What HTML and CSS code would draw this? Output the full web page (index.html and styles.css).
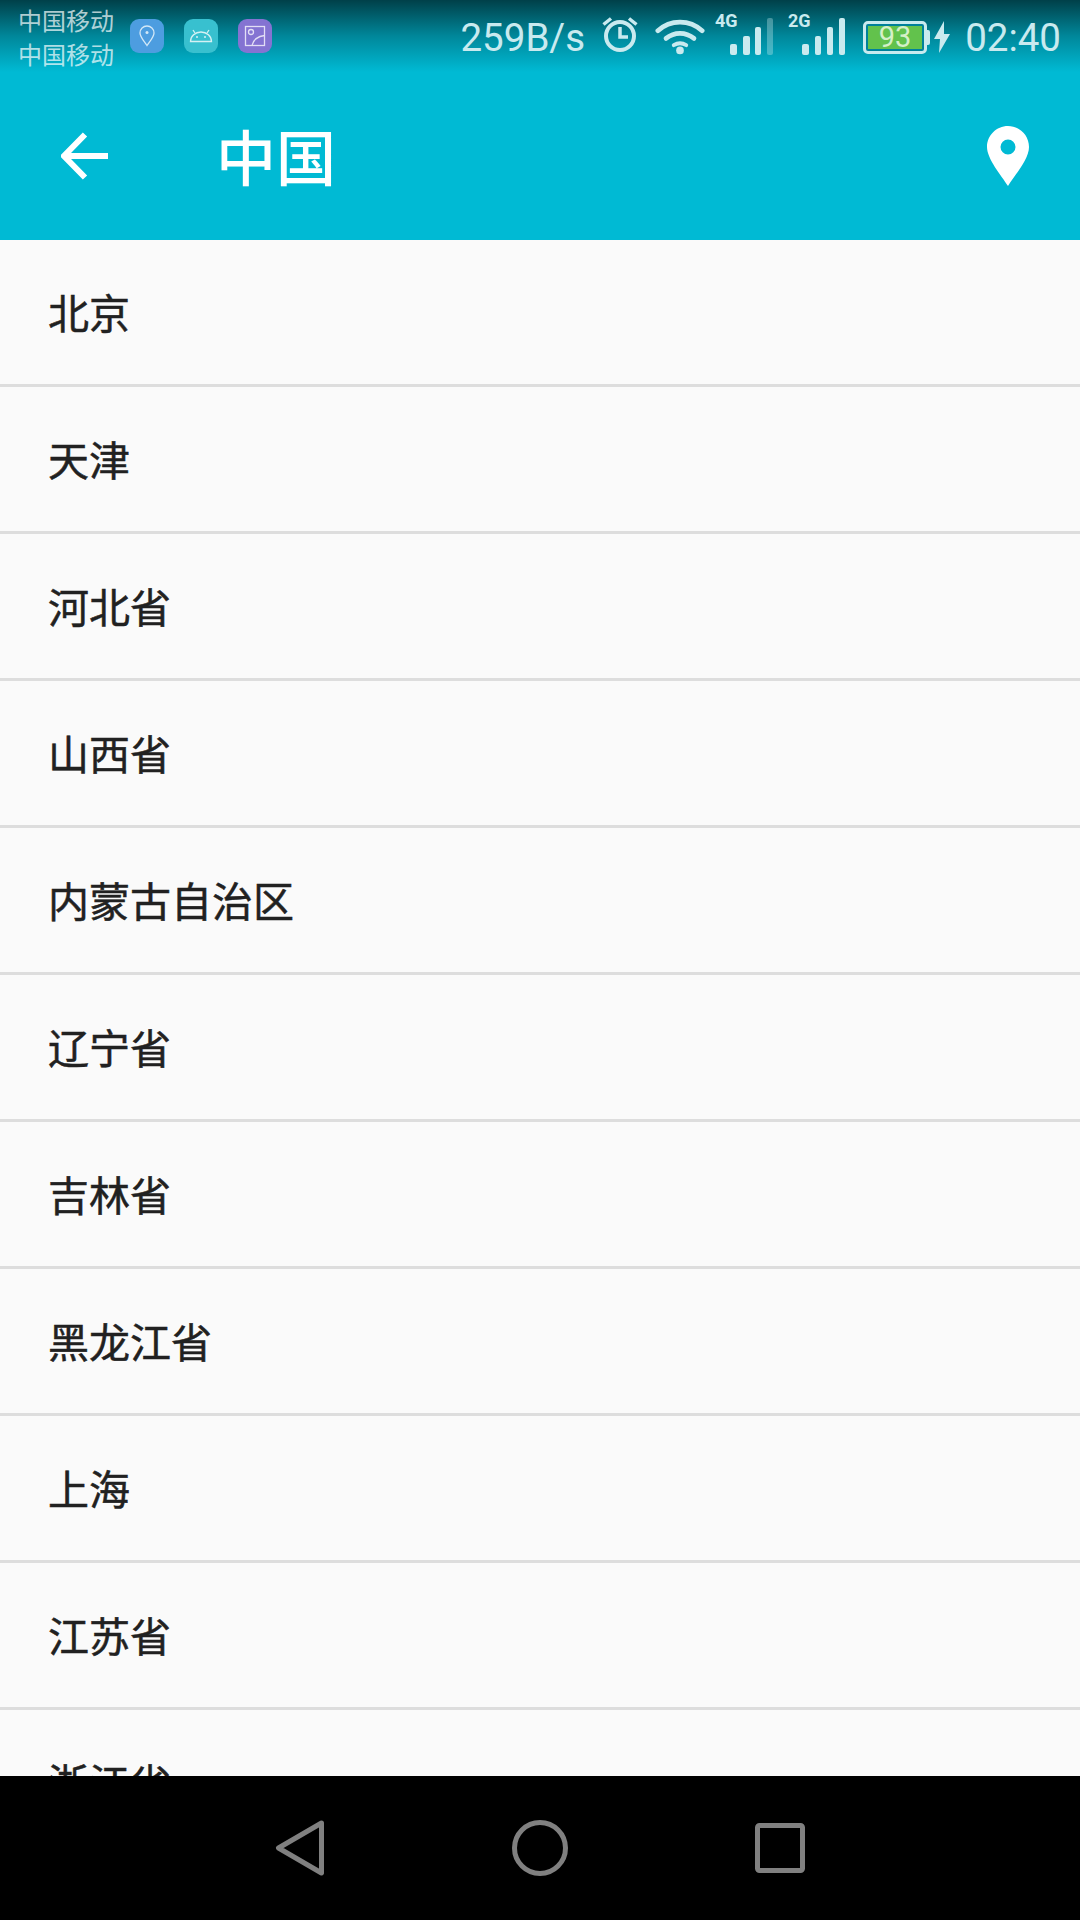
FILE: index.html
```html
<!DOCTYPE html>
<html lang="zh-CN">
<head>
    <meta charset="UTF-8">
    <title>中国</title>
    <link rel="stylesheet" href="styles.css">
</head>
<body>
<div class="screen">
    <header class="header">
        <div class="status-bar">
            <div class="carriers">
                <span>中国移动</span>
                <span>中国移动</span>
            </div>
            <div class="notify-icons">
                <svg class="notify" width="34" height="34" viewBox="0 0 34 34">
                    <rect width="34" height="34" rx="9" fill="#4d9de0"/>
                    <path d="M17 26.500c-3-4.500-7-8.500-7-12.500a7 7 0 0 1 14 0c0 4-4 8-7 12.500z" fill="none" stroke="#d3e8f7" stroke-width="1.300"/>
                    <circle cx="17" cy="13.500" r="1.500" fill="#d3e8f7"/>
                </svg>
                <svg class="notify" width="34" height="34" viewBox="0 0 34 34">
                    <rect width="34" height="34" rx="9" fill="#38c0cf"/>
                    <path d="M6.500 22.500a10.500 9.500 0 0 1 21 0z" fill="none" stroke="#d6f1f4" stroke-width="1.300"/>
                    <path d="M11 14l-2-3M23 14l2-3" stroke="#d6f1f4" stroke-width="1.300"/>
                    <circle cx="13" cy="18" r="1" fill="#d6f1f4"/>
                    <circle cx="21" cy="18" r="1" fill="#d6f1f4"/>
                </svg>
                <svg class="notify" width="34" height="34" viewBox="0 0 34 34">
                    <rect width="34" height="34" rx="9" fill="#8473d2"/>
                    <rect x="7.500" y="7.500" width="19" height="19" fill="none" stroke="#e2def5" stroke-width="1.300"/>
                    <circle cx="13" cy="13" r="2.500" fill="none" stroke="#e2def5" stroke-width="1.300"/>
                    <path d="M14 26.500c1-5.500 6-9.500 12.500-10" fill="none" stroke="#e2def5" stroke-width="1.300"/>
                </svg>
            </div>
            <div class="status-right">
                <span class="speed">259B/s</span>
                <svg class="alarm" width="38" height="38" viewBox="0 0 38 38">
                    <circle cx="19" cy="21" r="14" fill="none" stroke="#c9eaef" stroke-width="4"/>
                    <path d="M19 12v10h8" fill="none" stroke="#c9eaef" stroke-width="3.500"/>
                    <path d="M2.500 9.500L10 3.500M35.500 9.500L28 3.500" fill="none" stroke="#c9eaef" stroke-width="3.500"/>
                </svg>
                <svg class="wifi" width="50" height="38" viewBox="0 0 52 38">
                    <path d="M3 13.500c13-12 33-12 46 0" fill="none" stroke="#c9eaef" stroke-width="5" stroke-linecap="round"/>
                    <path d="M11.500 21.500c8.500-7 20.500-7 29 0" fill="none" stroke="#c9eaef" stroke-width="5" stroke-linecap="round"/>
                    <path d="M19.500 28.500c4-2.500 9-2.500 13 0" fill="none" stroke="#c9eaef" stroke-width="4" stroke-linecap="round"/>
                    <circle cx="26" cy="34" r="4" fill="#c9eaef"/>
                </svg>
                <svg class="signal" width="60" height="46" viewBox="0 0 60 46">
                    <text class="net-type" x="0" y="17">4G</text>
                    <rect x="15" y="34" width="7" height="11" rx="2" fill="#c9eaef"/>
                    <rect x="28" y="26" width="7" height="19" rx="2" fill="#c9eaef"/>
                    <rect x="40" y="17" width="6" height="28" rx="2" fill="#c9eaef"/>
                    <rect x="52" y="8" width="6" height="37" rx="2" fill="#c9eaef" opacity="0.35"/>
                </svg>
                <svg class="signal signal-last" width="60" height="46" viewBox="0 0 60 46">
                    <text class="net-type" x="1" y="17">2G</text>
                    <rect x="15" y="34" width="7" height="11" rx="2" fill="#c9eaef"/>
                    <rect x="28" y="26" width="6" height="19" rx="2" fill="#c9eaef"/>
                    <rect x="40" y="17" width="6" height="28" rx="2" fill="#c9eaef"/>
                    <rect x="52" y="8" width="6" height="37" rx="2" fill="#c9eaef"/>
                </svg>
                <div class="battery">
                    <div class="battery-fill">93</div>
                </div>
                <div class="battery-tip"></div>
                <svg class="bolt" width="16" height="32" viewBox="0 0 16 32">
                    <path d="M10 0L0 18h6L5 32l11-19h-6z" fill="#c9eaef"/>
                </svg>
                <span class="clock">02:40</span>
            </div>
        </div>
        <div class="toolbar">
            <svg class="back" width="48" height="48" viewBox="0 0 48 48">
                <path d="M47 24H4M24 2.500L3 24l21 21.500" fill="none" stroke="#fff" stroke-width="6"/>
            </svg>
            <h1 class="title">中国</h1>
            <svg class="pin" width="42" height="60" viewBox="0 0 42 60">
                <path fill-rule="evenodd" fill="#fff" d="M21 0C9.400 0 0 9.400 0 21c0 12 14 28 21 39 7-11 21-27 21-39C42 9.400 32.600 0 21 0zm0 13.500a7.500 7.500 0 1 1 0 15 7.500 7.500 0 0 1 0-15z"/>
            </svg>
        </div>
    </header>

    <ul class="list">
        <li class="list-item">北京</li>
        <li class="list-item">天津</li>
        <li class="list-item">河北省</li>
        <li class="list-item">山西省</li>
        <li class="list-item">内蒙古自治区</li>
        <li class="list-item">辽宁省</li>
        <li class="list-item">吉林省</li>
        <li class="list-item">黑龙江省</li>
        <li class="list-item">上海</li>
        <li class="list-item">江苏省</li>
        <li class="list-item">浙江省</li>
    </ul>

    <nav class="nav-bar">
        <svg width="50" height="56" viewBox="0 0 50 56">
            <path d="M46.500 3L3.500 28l43 25z" fill="none" stroke="#808080" stroke-width="5" stroke-linejoin="round"/>
        </svg>
        <svg width="56" height="56" viewBox="0 0 56 56">
            <circle cx="28" cy="28" r="25.500" fill="none" stroke="#808080" stroke-width="5"/>
        </svg>
        <svg width="50" height="50" viewBox="0 0 50 50">
            <rect x="2.500" y="2.500" width="45" height="45" rx="2" fill="none" stroke="#808080" stroke-width="5"/>
        </svg>
    </nav>
</div>
</body>
</html>
```

FILE: styles.css
```css
*{
    margin: 0;
    padding: 0;
    box-sizing: border-box;
}
body{
    width: 1080px;
    height: 1920px;
    overflow: hidden;
    font-family: "Noto Sans CJK SC", Roboto, sans-serif;
}
.screen{
    display: flex;
    flex-direction: column;
    height: 1920px;
    background-color: #fafafa;
}
.header{
    flex: none;
    height: 240px;
    background-color: #00bad4;
}
.status-bar{
    display: flex;
    align-items: center;
    height: 72px;
    padding: 0 19px 0 18px;
    background: linear-gradient(to bottom, #004049 0%, #00879a 50%, #00bad4 100%);
    color: #c9eaef;
}
.carriers{
    display: flex;
    flex-direction: column;
    font-size: 24px;
    line-height: 34px;
    width: 112px;
    padding-top: 1px;
    color: rgba(255, 255, 255, 0.7);
}
.notify-icons{
    display: flex;
    gap: 20px;
}
.status-right{
    display: flex;
    align-items: center;
    margin-left: auto;
    font-family: Roboto, sans-serif;
    font-size: 38.500px;
    height: 72px;
}
.speed{
    margin-right: 16px;
    padding-top: 3px;
}
.clock{
    padding-top: 3px;
}
.alarm{
    margin-right: 16px;
    margin-bottom: 4px;
}
.wifi{
    margin-right: 10px;
}
.signal{
    margin-right: 12px;
    margin-bottom: 6px;
}
.signal-last{
    margin-right: 16px;
}
.net-type{
    font-family: Roboto, sans-serif;
    font-size: 18px;
    font-weight: 700;
    fill: #c9eaef;
}
.battery{
    width: 64px;
    height: 33px;
    margin-top: 2px;
    border: 3px solid #c9eaef;
    border-radius: 5px;
    padding: 2px;
    background-color: #00819a;
}
.battery-fill{
    height: 100%;
    background-color: #62c24c;
    font-size: 29px;
    line-height: 23px;
    text-align: center;
    color: #d5f0c8;
}
.battery-tip{
    width: 3px;
    height: 15px;
    margin-top: 2px;
    background-color: #c9eaef;
    border-radius: 0 2px 2px 0;
    margin-right: 4px;
}
.bolt{
    margin-top: 2px;
    margin-right: 15px;
}
.toolbar{
    display: flex;
    align-items: center;
    height: 168px;
    padding: 0 51px 0 61px;
    color: #fff;
}
.back{
    flex: none;
}
.title{
    font-size: 60px;
    font-weight: 500;
    line-height: 1;
    margin-left: 107px;
    padding-bottom: 3px;
}
.pin{
    margin-left: auto;
}
.list{
    flex: 1;
    overflow: hidden;
    list-style: none;
}
.list-item{
    height: 147px;
    line-height: 142px;
    padding-left: 48px;
    font-size: 41px;
    color: #212121;
    -webkit-text-stroke: 0.5px #212121;
    border-bottom: 3px solid #dddddd;
}
.nav-bar{
    flex: none;
    display: flex;
    align-items: center;
    justify-content: center;
    gap: 187px;
    height: 144px;
    background-color: #000;
}
```
